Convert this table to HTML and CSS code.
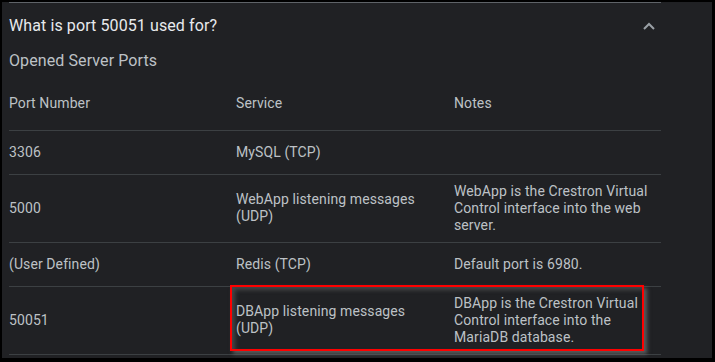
FILE: index.html
```html
<!DOCTYPE html>
<html lang="en">
<head>
    <meta charset="UTF-8">
    <meta name="viewport" content="width=device-width, initial-scale=1.0">
    <title>What is port 50051 used for?</title>
    <link rel="stylesheet" href="styles.css">
</head>
<body>
    <div class="frame">
        <div class="divider"></div>

        <div class="question">
            <h3>What is port 50051 used for?</h3>
            <svg class="chevron" width="12" height="8" viewBox="0 0 12 8">
                <path d="M1 7 L6 2 L11 7" fill="none" stroke="#9aa0a6" stroke-width="2"/>
            </svg>
        </div>

        <div class="answer">
            <h4>Opened Server Ports</h4>
            <table class="ports">
                <colgroup>
                    <col class="c1">
                    <col class="c2">
                    <col class="c3">
                </colgroup>
                <thead>
                    <tr>
                        <th>Port Number</th>
                        <th>Service</th>
                        <th>Notes</th>
                    </tr>
                </thead>
                <tbody>
                    <tr>
                        <td>3306</td>
                        <td>MySQL (TCP)</td>
                        <td></td>
                    </tr>
                    <tr>
                        <td>5000</td>
                        <td>WebApp listening messages (UDP)</td>
                        <td>WebApp is the Crestron Virtual Control interface into the web server.</td>
                    </tr>
                    <tr>
                        <td>(User Defined)</td>
                        <td>Redis (TCP)</td>
                        <td>Default port is 6980.</td>
                    </tr>
                    <tr>
                        <td>50051</td>
                        <td>DBApp listening messages (UDP)</td>
                        <td>DBApp is the Crestron Virtual Control interface into the MariaDB database.</td>
                    </tr>
                </tbody>
            </table>
        </div>

        <!-- annotation box over the last row -->
        <div class="highlight"></div>
    </div>
</body>
</html>
```

FILE: styles.css
```css
* {
    margin: 0;
    padding: 0;
    box-sizing: border-box;
}

body {
    background-color: #000;
    font-family: Roboto, "Noto Sans", Arial, sans-serif;
    letter-spacing: 0.1px;
    width: 715px;
    height: 362px;
    overflow: hidden;
}

.frame {
    position: relative;
    margin: 2px 3px 0 2px;
    height: 356px;
    background-color: #202124;
    padding-left: 7px;
}

.divider {
    width: 652px;
    border-top: 1px solid #5f6368;
}

.question {
    width: 652px;
    display: flex;
    justify-content: space-between;
    align-items: center;
    padding-top: 13px;
    padding-right: 6px;
}

.question h3 {
    font-size: 16px;
    font-weight: 400;
    line-height: 20px;
    color: #e8eaed;
}

.chevron {
    display: block;
}

.answer h4 {
    margin-top: 15px;
    font-size: 16px;
    font-weight: 400;
    line-height: 20px;
    color: #bdc1c6;
}

.ports {
    margin-top: 7px;
    width: 652px;
    table-layout: fixed;
    border-collapse: collapse;
    font-size: 14px;
    line-height: 17px;
    color: #bdc1c6;
}

.ports .c1 { width: 227px; }
.ports .c2 { width: 218px; }
.ports .c3 { width: 207px; }

.ports th {
    text-align: left;
    font-weight: 400;
    height: 52px;
    padding: 8px 16px 8px 0;
}

.ports tr {
    border-bottom: 1px solid #3c4043;
}

.ports td {
    height: 44px;
    padding: 8px 16px 8px 0;
    vertical-align: middle;
}

.ports td:last-child {
    padding-right: 8px;
}

.highlight {
    position: absolute;
    left: 228px;
    top: 283px;
    width: 414px;
    height: 66px;
    border: 2px solid #f00;
    box-shadow: 3px 3px 4px rgba(140, 140, 140, 0.55), inset 3px 3px 4px rgba(140, 140, 140, 0.35);
}
```
